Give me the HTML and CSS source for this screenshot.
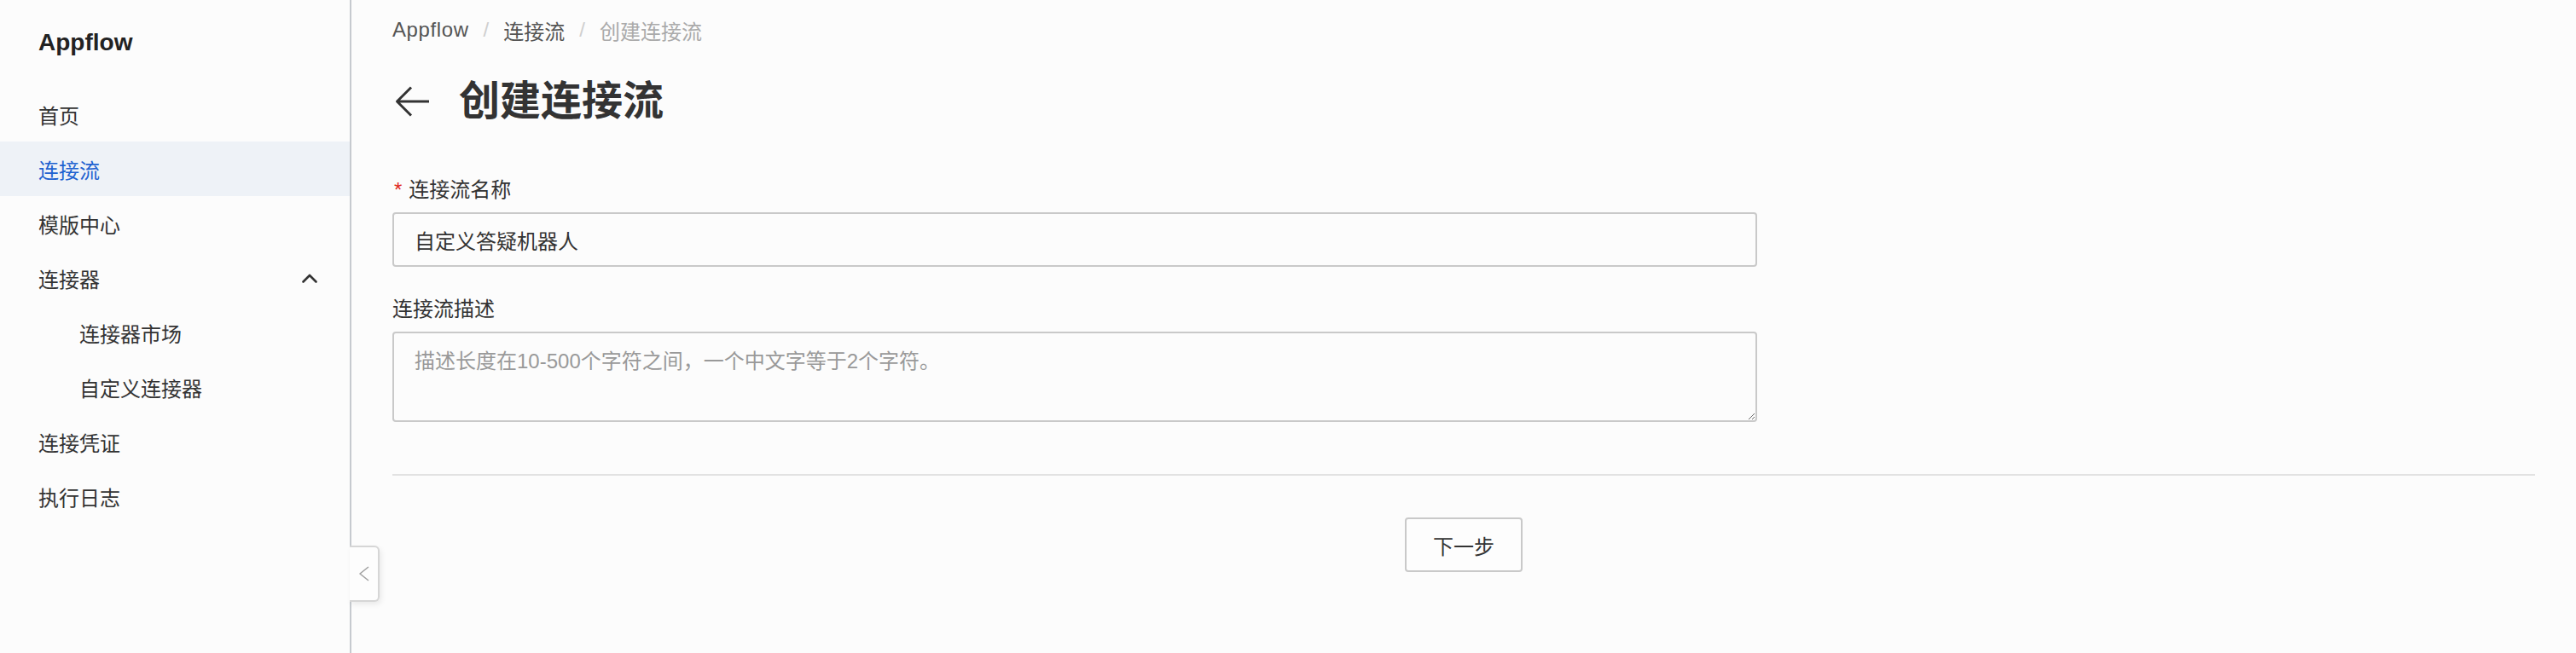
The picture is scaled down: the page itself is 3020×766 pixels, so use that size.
FILE: index.html
```html
<!DOCTYPE html>
<html lang="zh-CN">
<head>
<meta charset="utf-8">
<title>创建连接流 - Appflow</title>
<link rel="stylesheet" href="styles.css">
</head>
<body>
<div class="app">
  <aside class="sidebar">
    <div class="brand">Appflow</div>
    <nav class="nav">
      <a class="nav-item">首页</a>
      <a class="nav-item active">连接流</a>
      <a class="nav-item">模版中心</a>
      <div class="nav-item group">
        <span>连接器</span>
        <svg class="chev-up" width="18" height="11" viewBox="0 0 18 11"><path d="M1.5 9.5 L9 2 L16.5 9.5" fill="none" stroke="#333" stroke-width="2.6" stroke-linecap="round" stroke-linejoin="round"/></svg>
      </div>
      <a class="nav-item sub">连接器市场</a>
      <a class="nav-item sub">自定义连接器</a>
      <a class="nav-item">连接凭证</a>
      <a class="nav-item">执行日志</a>
    </nav>
    <button class="collapse-tab" type="button" aria-label="收起">
      <svg width="14" height="18" viewBox="0 0 14 18"><path d="M12 1 L2 9 L12 17" fill="none" stroke="#a0a0a0" stroke-width="1.6" stroke-linejoin="round"/></svg>
    </button>
  </aside>

  <main class="main">
    <div class="breadcrumb">
      <span class="crumb latin">Appflow</span>
      <span class="sep">/</span>
      <span class="crumb">连接流</span>
      <span class="sep">/</span>
      <span class="crumb current">创建连接流</span>
    </div>

    <div class="page-header">
      <svg class="back" width="40" height="36" viewBox="0 0 40 36"><path d="M19 1.5 L2.5 18 L19 34.5 M2.5 18 H40" fill="none" stroke="#333" stroke-width="3" stroke-linejoin="round"/></svg>
      <h1 class="title">创建连接流</h1>
    </div>

    <form class="form">
      <div class="field">
        <label class="label"><span class="req">*</span>连接流名称</label>
        <input class="input" type="text" value="自定义答疑机器人">
      </div>
      <div class="field field-2">
        <label class="label">连接流描述</label>
        <textarea class="textarea" placeholder="描述长度在10-500个字符之间，一个中文字等于2个字符。"></textarea>
      </div>
    </form>

    <div class="divider"></div>

    <div class="actions">
      <button class="btn" type="button">下一步</button>
    </div>
  </main>
</div>
</body>
</html>
```

FILE: styles.css
```css
* { box-sizing: border-box; }

html, body {
  margin: 0;
  padding: 0;
  background: #fcfcfc;
}

body {
  font-family: "Liberation Sans", "Noto Sans CJK SC", sans-serif;
  color: #333;
}

.app {
  display: flex;
  height: 766px;
}

/* Sidebar */
.sidebar {
  position: relative;
  width: 412px;
  flex: 0 0 412px;
  border-right: 2px solid #c6cacf;
  background: #fcfcfc;
}

.brand {
  margin-top: 32px;
  padding-left: 45px;
  font-size: 28px;
  line-height: 36px;
  font-weight: 700;
  color: #222;
}

.nav {
  margin-top: 34px;
  display: flex;
  flex-direction: column;
}

.nav-item {
  display: flex;
  align-items: center;
  height: 64px;
  padding-left: 45px;
  font-size: 24px;
  color: #333;
  text-decoration: none;
}

.nav-item.active {
  background: #eef2f7;
  color: #1e62d0;
}

.nav-item.group {
  justify-content: space-between;
  padding-right: 38px;
}

.nav-item.sub {
  padding-left: 93px;
}

.collapse-tab {
  position: absolute;
  top: 640px;
  right: -35px;
  width: 35px;
  height: 66px;
  padding: 0;
  display: flex;
  align-items: center;
  justify-content: center;
  background: #fdfdfd;
  border: 2px solid #d6d6d6;
  border-left: none;
  border-radius: 0 6px 6px 0;
  box-shadow: 2px 3px 6px rgba(0, 0, 0, 0.08);
}

/* Main */
.main {
  flex: 1;
  padding: 16px 48px 0 48px;
}

.breadcrumb {
  display: flex;
  align-items: center;
  height: 38px;
  font-size: 24px;
}

.crumb { color: #555; }
.crumb.latin { letter-spacing: 0.6px; }
.crumb.current { color: #aaa; }

.sep {
  color: #cfcfcf;
  margin: 0 17px;
}

.page-header {
  display: flex;
  align-items: center;
  height: 66px;
  margin-top: 32px;
  padding-left: 3px;
}

.back { flex: 0 0 auto; }

.title {
  margin: 0 0 0 35px;
  font-size: 48px;
  line-height: 66px;
  font-weight: 600;
  color: #333;
}

.form {
  width: 1600px;
  margin-top: 53px;
}

.field {
  display: flex;
  flex-direction: column;
}

.field-2 {
  margin-top: 32px;
}

.label {
  font-size: 24px;
  line-height: 36px;
  color: #333;
  margin-bottom: 8px;
}

.req {
  color: #e0281e;
  margin-right: 8px;
  padding-left: 2px;
}

.input,
.textarea {
  width: 100%;
  font-family: "Liberation Sans", "Noto Sans CJK SC", sans-serif;
  font-size: 24px;
  color: #333;
  background: #fcfcfc;
  border: 2px solid #c9c9c9;
  border-radius: 4px;
  outline: none;
}

.input {
  height: 64px;
  padding: 0 24px;
}

.textarea {
  height: 106px;
  padding: 14px 24px;
  line-height: 38px;
  resize: vertical;
  display: block;
}

.textarea::placeholder {
  color: #999;
}

.divider {
  margin-top: 61px;
  height: 2px;
  background: #e2e2e2;
}

.actions {
  display: flex;
  justify-content: center;
  margin-top: 49px;
}

.btn {
  width: 138px;
  height: 64px;
  font-family: "Liberation Sans", "Noto Sans CJK SC", sans-serif;
  font-size: 24px;
  color: #333;
  background: #fdfdfd;
  border: 2px solid #c9c9c9;
  border-radius: 4px;
}
```
